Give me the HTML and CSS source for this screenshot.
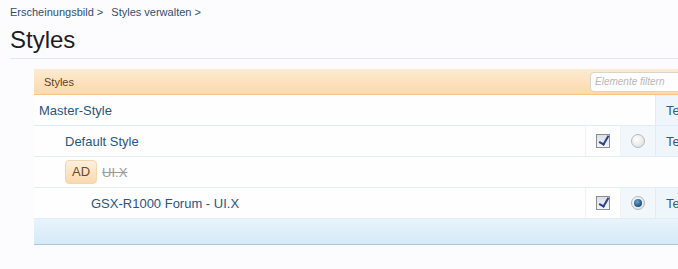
FILE: index.html
```html
<!DOCTYPE html>
<html lang="de">
<head>
  <meta charset="UTF-8">
  <title>Styles</title>
  <link rel="stylesheet" href="styles.css">
</head>
<body>
  <div class="crumbs">
    <a href="#">Erscheinungsbild</a> &gt;
    <a href="#">Styles verwalten</a> &gt;
  </div>
  <h1>Styles</h1>

  <div class="content">
    <div class="style-list">
      <div class="list-head">
        <span>Styles</span>
        <input type="text" class="filter" placeholder="Elemente filtern">
      </div>

      <div class="row">
        <div class="name depth-0">Master-Style</div>
        <div class="cell-te">Te</div>
      </div>

      <div class="row">
        <div class="name depth-1">Default Style</div>
        <div class="cell-check"><span class="checkbox checked"></span></div>
        <div class="cell-radio"><span class="radio"></span></div>
        <div class="cell-te">Te</div>
      </div>

      <div class="row">
        <div class="name depth-1"><span class="badge">AD</span><span class="disabled">UI.X</span></div>
      </div>

      <div class="row">
        <div class="name depth-2">GSX-R1000 Forum - UI.X</div>
        <div class="cell-check"><span class="checkbox checked"></span></div>
        <div class="cell-radio"><span class="radio selected"></span></div>
        <div class="cell-te">Te</div>
      </div>

      <div class="list-foot"></div>
    </div>
  </div>
</body>
</html>
```

FILE: styles.css
```css
body {
    font-family: "Liberation Sans", Arial, sans-serif;
    background-color: #fcfcfe;
    margin: 0;
    padding: 0;
    overflow: hidden;
}

a {
    color: #2f4f6f;
    text-decoration: none;
}

.crumbs {
    padding: 6px 10px 0;
    font-size: 11px;
    color: #2f4f6f;
    height: 16px;
}

.crumbs a + a {
    margin-left: 5px;
}

h1 {
    margin: 0;
    padding: 4px 10px 0;
    font-size: 24px;
    font-weight: normal;
    color: #1e1e1e;
    height: 32px;
}

.content {
    margin-left: 10px;
    border-top: 1px solid #dcebf2;
    padding: 10px 0 0 24px;
}

.style-list {
    width: 680px;
}

.list-head {
    display: flex;
    align-items: center;
    justify-content: space-between;
    height: 25px;
    padding-left: 10px;
    background: linear-gradient(#fdebd2, #fbd9ab);
    border-bottom: 1px solid #f4c586;
    font-size: 11px;
    color: #5e4022;
}

.filter {
    width: 110px;
    height: 20px;
    box-sizing: border-box;
    margin-right: 14px;
    border: 1px solid #dcd4c8;
    border-radius: 4px;
    background-color: #fefefe;
    padding: 2px 4px;
    font-family: inherit;
    font-size: 10px;
    font-style: italic;
}

.filter::placeholder {
    color: #b8b8b8;
}

.row {
    display: flex;
    height: 30px;
    border-bottom: 1px solid #e0eef3;
    background-color: #fefefe;
    font-size: 13px;
    color: #2b5580;
}

.name {
    flex: 1;
    display: flex;
    align-items: center;
}

.depth-0 { padding-left: 5px; }
.depth-1 { padding-left: 31px; }
.depth-2 { padding-left: 57px; }

.cell-check, .cell-radio {
    width: 34px;
    display: flex;
    align-items: center;
    justify-content: center;
    border-left: 1px solid #eef3f5;
}

.cell-radio {
    background-color: #f1f7fb;
}

.cell-te {
    width: 59px;
    display: flex;
    align-items: center;
    padding-left: 10px;
    box-sizing: border-box;
    background-color: #eef6fb;
    border-left: 1px solid #e0eef3;
    color: #2b5f86;
}

.checkbox {
    width: 12px;
    height: 12px;
    border: 1px solid #8b8f94;
    background: linear-gradient(#dcdfe6, #f4f5f8);
    position: relative;
}

.checkbox.checked::after {
    content: "";
    position: absolute;
    left: 4px;
    top: -1px;
    width: 4px;
    height: 9px;
    border: solid #2a3f8f;
    border-width: 0 2px 2px 0;
    transform: rotate(30deg);
}

.radio {
    width: 12px;
    height: 12px;
    border-radius: 50%;
    border: 1px solid #b5b9bd;
    background: radial-gradient(circle at 40% 35%, #ffffff, #d8dadd);
    position: relative;
}

.radio.selected::after {
    content: "";
    position: absolute;
    left: 2px;
    top: 2px;
    width: 8px;
    height: 8px;
    border-radius: 50%;
    background: radial-gradient(circle at 40% 35%, #6aa6d4, #1c4f78 70%);
}

.badge {
    display: inline-block;
    padding: 0 6px;
    height: 22px;
    line-height: 22px;
    border-radius: 4px;
    border: 1px solid #f3d6ae;
    background: linear-gradient(#fdf0dd, #fad9ad);
    color: #6b4a26;
    font-size: 13px;
}

.disabled {
    margin-left: 1px;
    padding-left: 4px;
    color: #9a9a9a;
    text-decoration: line-through;
}

.list-foot {
    height: 25px;
    background: linear-gradient(#e8f4fc, #d5e9f7);
    border-bottom: 1px solid #a9c8dc;
}
```
